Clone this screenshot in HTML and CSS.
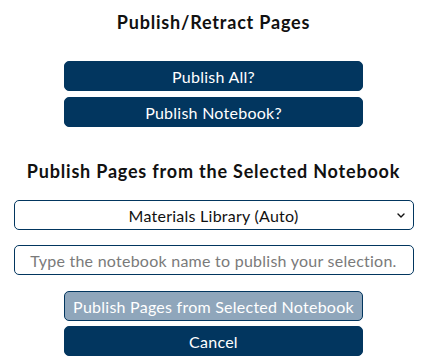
FILE: index.html
```html
<!DOCTYPE html>
<html>
<head>
<meta charset="utf-8">
<link rel="stylesheet" href="styles.css">
</head>
<body>

<div class="panel">
  <h2 class="title">Publish/Retract Pages</h2>

  <div class="btn-group">
    <button class="btn">Publish All?</button>
    <button class="btn">Publish Notebook?</button>
  </div>

  <h2 class="subtitle">Publish Pages from the Selected Notebook</h2>

  <!-- notebook picker -->
  <div class="select-wrap">
    <select class="field notebook-select">
      <option>Materials Library (Auto)</option>
    </select>
    <svg class="chevron" width="8" height="5" viewBox="0 0 8 5">
      <path d="M1 1 L4 4 L7 1" fill="none" stroke="#111" stroke-width="1.4" stroke-linecap="round" stroke-linejoin="round"/>
    </svg>
  </div>

  <input class="field confirm-input" type="text" placeholder="Type the notebook name to publish your selection.">

  <div class="btn-group bottom">
    <button class="btn disabled" disabled>Publish Pages from Selected Notebook</button>
    <button class="btn">Cancel</button>
  </div>
</div>

</body>
</html>
```

FILE: styles.css
```css
body {
  margin: 0;
  padding-left: 3px;
  background-color: #fff;
  font-family: Lato, "Noto Sans", sans-serif;
  color: #111;
}

.panel {
  display: flex;
  flex-direction: column;
  align-items: center;
}

.title,
.subtitle {
  margin: 0;
  font-size: 18px;
  font-weight: 700;
  line-height: 22px;
  letter-spacing: 0.8px;
  text-align: center;
}

.title {
  margin-top: 11px;
}

.subtitle {
  margin-top: 33px;
}

.btn-group {
  width: 299px;
  display: flex;
  flex-direction: column;
  gap: 6px;
  margin-top: 28px;
}

.btn-group.bottom {
  margin-top: 16px;
  gap: 5px;
}

.btn {
  height: 30px;
  padding: 0;
  border: 1px solid #02365f;
  border-radius: 5px;
  background-color: #02365f;
  color: #fff;
  font-family: inherit;
  font-size: 16px;
  letter-spacing: 0.25px;
  cursor: pointer;
}

.btn.disabled {
  background-color: #8fa6bb;
  cursor: default;
}

.select-wrap {
  position: relative;
  width: 400px;
  margin-top: 18px;
}

.field {
  box-sizing: border-box;
  width: 400px;
  height: 30px;
  border: 1px solid #02365f;
  border-radius: 5px;
  background-color: #fff;
  font-family: inherit;
  font-size: 16px;
  letter-spacing: 0.25px;
  color: #111;
  text-align: center;
  text-align-last: center;
  outline: none;
}

.notebook-select {
  display: block;
  appearance: none;
  -webkit-appearance: none;
  padding: 0 20px;
}

.chevron {
  position: absolute;
  right: 9px;
  top: 13px;
}

.confirm-input {
  margin-top: 15px;
  padding: 0 6px;
}

.confirm-input::placeholder {
  color: #7a7a7a;
}
```
